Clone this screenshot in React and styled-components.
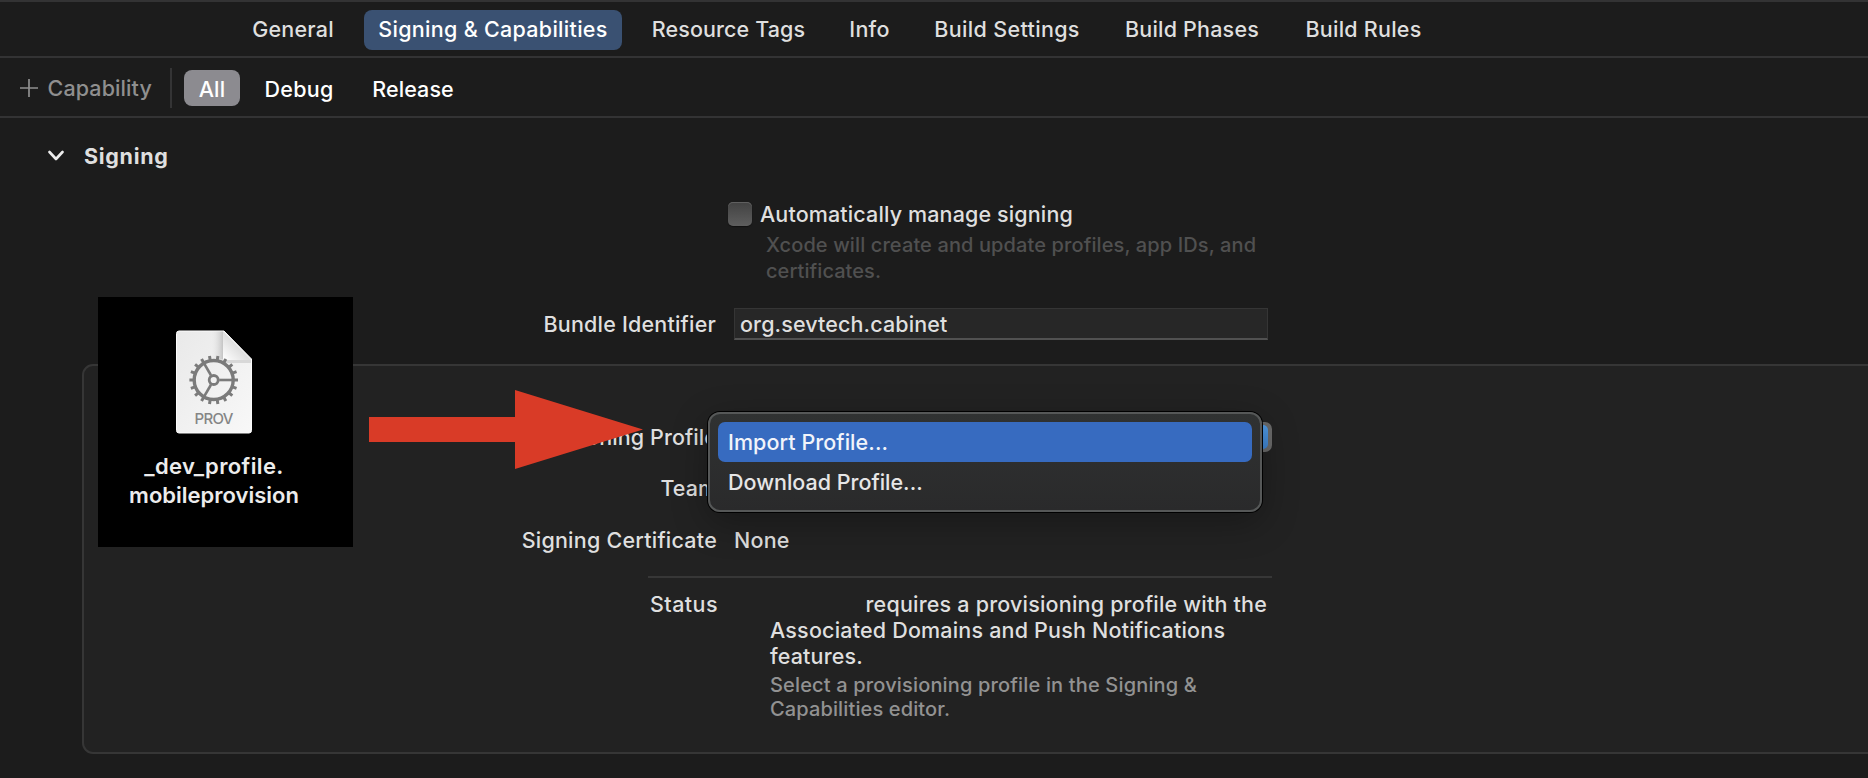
import React from "react";
import styled, { createGlobalStyle, css } from "styled-components";

const GlobalStyle = createGlobalStyle`
  *, *::before, *::after { box-sizing: border-box; }
  body {
    margin: 0;
    background: #1c1c1c;
    font-family: Inter, "Liberation Sans", sans-serif;
    -webkit-font-smoothing: antialiased;
  }
`;

const Editor = styled.main`
  position: relative;
  display: flex;
  flex-direction: column;
  height: 778px;
  overflow: hidden;
  background: #1c1c1c;
  color: #dfdfdf;
  font-size: 21.5px;
  font-weight: 500;
  line-height: 26px;
  white-space: nowrap;
`;

const Tracked = styled.span`
  letter-spacing: ${(p) => p.$tracking}px;
`;

/* Target tabs */
const TabBar = styled.nav`
  display: flex;
  gap: 16px;
  flex: none;
  height: 58px;
  padding: 8px 0 0 238px;
  border-top: 2px solid #333334;
  border-bottom: 2px solid #333334;
`;

const Tab = styled.div`
  display: flex;
  align-items: center;
  justify-content: center;
  width: ${(p) => p.$width}px;
  height: 40px;
  padding-bottom: 2px;
  border-radius: 8px;
  ${(p) =>
    p.$active &&
    css`
      background: #3a5172;
      color: #fff;
    `}
`;

/* Configuration filter */
const FilterBar = styled.div`
  display: flex;
  align-items: center;
  flex: none;
  height: 60px;
  padding: 2px 0 0 20px;
  border-bottom: 2px solid #333334;
  color: #fff;
`;

const AddCapability = styled.div`
  display: flex;
  align-items: center;
  gap: 9.5px;
  width: 150px;
  color: #8f8f8f;
`;

const Divider = styled.div`
  width: 2px;
  height: 40px;
  margin-right: 12px;
  background: #343435;
`;

const Filter = styled.div`
  display: flex;
  align-items: center;
  justify-content: center;
  width: ${(p) => p.$width}px;
  height: 36px;
  padding-top: 1px;
  border-radius: 8px;
  background: ${(p) => (p.$active ? "#8c8b90" : "transparent")};
`;

/* Signing section */
const SectionHeader = styled.header`
  display: flex;
  align-items: center;
  gap: 20px;
  flex: none;
  margin: 25px 0 0 48px;
  font-weight: 700;
`;

const CheckRow = styled.div`
  display: flex;
  align-items: center;
  gap: 8px;
  height: 26px;
  margin: 32px 0 0 728px;
`;

const Checkbox = styled.div`
  width: 24px;
  height: 24px;
  border-radius: 5px;
  background: linear-gradient(#424242, #5e5e5e);
  box-shadow: inset 0 1px 0 #606060, 0 1px 1px #111;
`;

const Hint = styled.div`
  display: flex;
  flex-direction: column;
  margin: 5px 0 0 766px;
  color: #505050;
  font-size: 20px;
`;

const FieldRow = styled.div`
  display: grid;
  grid-template-columns: ${(p) => p.$label}px 1fr;
  column-gap: ${(p) => p.$gap || 18}px;
  align-items: center;
  height: ${(p) => p.$height || 26}px;
  margin-top: ${(p) => p.$top}px;
`;

const FieldLabel = styled.label`
  text-align: right;
`;

const TextField = styled.div`
  display: flex;
  align-items: center;
  width: 534px;
  height: 32px;
  padding-left: 5px;
  border: 1px solid #353535;
  border-bottom: 2px solid #515151;
  background: #272727;
`;

const Panel = styled.section`
  flex: none;
  height: 390px;
  margin: 24px -20px 0 82px;
  border: 2px solid #363636;
  border-radius: 11px;
  background: #222;
`;

const SelectBox = styled.div`
  display: flex;
  justify-content: flex-end;
  width: 538px;
  height: 30px;
  padding: 3px 4px;
  border-radius: 7px;
  background: #6a6a6a;
`;

const SelectStepper = styled.div`
  width: 24px;
  height: 24px;
  border-radius: 5px;
  background: linear-gradient(#4f9ae4, #3f83cf);
`;

const Rule = styled.hr`
  width: 624px;
  height: 2px;
  margin: 23px 0 0 564px;
  border: 0;
  background: #373737;
`;

const StatusRow = styled.div`
  display: grid;
  grid-template-columns: 634px 1fr;
  column-gap: 52px;
  margin-top: 13px;
`;

const Message = styled.div`
  display: flex;
  flex-direction: column;
`;

const FirstLine = styled.div`
  padding-left: 95.5px;
`;

const Advice = styled.div`
  display: flex;
  flex-direction: column;
  margin-top: 4px;
  color: #929292;
  font-size: 20px;
  line-height: 24px;
`;

/* Floating pieces */
const FileTile = styled.figure`
  position: absolute;
  top: 297px;
  left: 98px;
  display: flex;
  flex-direction: column;
  align-items: center;
  width: 255px;
  height: 250px;
  margin: 0;
  padding: 32px 23px 0 0;
  background: #000;
`;

const FileName = styled.figcaption`
  display: flex;
  flex-direction: column;
  align-items: center;
  margin-top: 18px;
  color: #ececec;
  font-size: 22px;
  font-weight: 600;
  line-height: 28.5px;
`;

const Arrow = styled.svg`
  position: absolute;
  top: 390px;
  left: 369px;
`;

const Menu = styled.div`
  position: absolute;
  top: 412px;
  left: 708px;
  width: 554px;
  height: 100px;
  padding: 8px 8px;
  border: 2px solid #565858;
  border-radius: 12px;
  background: linear-gradient(#303232, #2a2a2b);
  box-shadow: 0 0 0 1px #000, 0 10px 36px rgba(0, 0, 0, 0.3);
`;

const MenuItem = styled.div`
  display: flex;
  align-items: center;
  height: 40px;
  padding: 0 10px 1px;
  border-radius: 7px;
  color: ${(p) => (p.$active ? "#f1f4fa" : "#e6e6e6")};
  background: ${(p) => (p.$active ? "#376bc0" : "transparent")};
`;

const TABS = [
  ["General", 110, 0.2],
  ["Signing & Capabilities", 258, 0.29],
  ["Resource Tags", 181, 0.1],
  ["Info", 69, 0.3],
  ["Build Settings", 174, 0.35],
  ["Build Phases", 164, 0.2],
  ["Build Rules", 147, 0.24],
];

const FILTERS = [
  ["All", 56, 0.17],
  ["Debug", 118, 0.28],
  ["Release", 110, 0.08],
];

const TEETH = Array.from({ length: 18 }, (_, i) => i * 20);

function ProfileIcon() {
  return (
    <svg width="78" height="105" viewBox="0 0 78 105">
      <defs>
        <linearGradient id="paper" x1="0" y1="0" x2="1" y2="1">
          <stop offset="0" stopColor="#e9e9e9" />
          <stop offset="1" stopColor="#f8f8f8" />
        </linearGradient>
        <linearGradient id="foldShade" x1="1" y1="0" x2="0" y2="0">
          <stop offset="0" stopColor="#c4c4c4" />
          <stop offset="1" stopColor="#ebebeb" stopOpacity="0" />
        </linearGradient>
        <linearGradient id="fold" x1="0" y1="1" x2="0.5" y2="0.5">
          <stop offset="0" stopColor="#fff" />
          <stop offset="1" stopColor="#dedede" />
        </linearGradient>
      </defs>
      <path
        d="M4 2h45L76.500 30V101.500a2.500 2.500 0 0 1-2.500 2.500H4A2.500 2.500 0 0 1 1.500 101.500V4.500A2.500 2.500 0 0 1 4 2Z"
        fill="url(#paper)"
        stroke="#fcfcfc"
        strokeWidth="1"
      />
      <path d="M36 2.500h12v28H36Z" fill="url(#foldShade)" />
      <path d="M48 31h28v3H50Z" fill="#d8d8d8" />
      <path d="M48 2.500L76 31H50.500A2.500 2.500 0 0 1 48 28.500Z" fill="url(#fold)" />
      <g transform="translate(38.700 51)" stroke="#7b7b7b" fill="none">
        <circle r="19.500" strokeWidth="3.400" />
        <circle r="4.500" strokeWidth="2.800" />
        {[0, 120, 240].map((a) => (
          <path key={a} d="M5.500 0H19" strokeWidth="2.600" transform={`rotate(${a})`} />
        ))}
        {TEETH.map((a) => (
          <path key={a} d="M20 0H24.300" strokeWidth="3" transform={`rotate(${a})`} />
        ))}
      </g>
      <text
        x="39"
        y="94.500"
        textAnchor="middle"
        textLength="39"
        fill="#858585"
        fontFamily="Inter, sans-serif"
        fontSize="15"
        fontWeight="500"
      >
        PROV
      </text>
    </svg>
  );
}

export default function App() {
  return (
    <>
      <GlobalStyle />
      <Editor>
        <TabBar>
          {TABS.map(([name, width, tracking], i) => (
            <Tab key={name} $width={width} $active={i === 1}>
              <Tracked $tracking={tracking}>{name}</Tracked>
            </Tab>
          ))}
        </TabBar>

        <FilterBar>
          <AddCapability>
            <svg width="18" height="18" viewBox="0 0 18 18">
              <path d="M9 0V18M0 9H18" stroke="#8f8f8f" strokeWidth="1.700" />
            </svg>
            <Tracked $tracking={0.11}>Capability</Tracked>
          </AddCapability>
          <Divider />
          {FILTERS.map(([name, width, tracking], i) => (
            <Filter key={name} $width={width} $active={i === 0}>
              <Tracked $tracking={tracking}>{name}</Tracked>
            </Filter>
          ))}
        </FilterBar>

        <SectionHeader>
          <svg width="16" height="12" viewBox="0 0 16 12">
            <path
              d="M1.500 2L8 9L14.500 2"
              fill="none"
              stroke="#ececec"
              strokeWidth="2.600"
              strokeLinecap="round"
              strokeLinejoin="round"
            />
          </svg>
          <Tracked $tracking={0.7}>Signing</Tracked>
        </SectionHeader>

        <CheckRow>
          <Checkbox />
          <Tracked $tracking={0.13}>Automatically manage signing</Tracked>
        </CheckRow>
        <Hint>
          <Tracked $tracking={0.11}>Xcode will create and update profiles, app IDs, and</Tracked>
          <Tracked $tracking={0.07}>certificates.</Tracked>
        </Hint>

        <FieldRow $label={716} $height={32} $top={24}>
          <FieldLabel>
            <Tracked $tracking={0.2}>Bundle Identifier</Tracked>
          </FieldLabel>
          <TextField>
            <Tracked $tracking={0.12}>org.sevtech.cabinet</Tracked>
          </TextField>
        </FieldRow>

        <Panel>
          <FieldRow $label={633} $gap={17} $height={30} $top={56}>
            <FieldLabel>
              <Tracked $tracking={0.08}>Provisioning Profile</Tracked>
            </FieldLabel>
            <SelectBox>
              <SelectStepper />
            </SelectBox>
          </FieldRow>
          <FieldRow $label={633} $top={23}>
            <FieldLabel>
              <Tracked $tracking={0}>Team</Tracked>
            </FieldLabel>
          </FieldRow>
          <FieldRow $label={633} $gap={17} $top={26}>
            <FieldLabel>
              <Tracked $tracking={0.23}>Signing Certificate</Tracked>
            </FieldLabel>
            <Tracked $tracking={0.2}>None</Tracked>
          </FieldRow>
          <Rule />
          <StatusRow>
            <FieldLabel>
              <Tracked $tracking={0.45}>Status</Tracked>
            </FieldLabel>
            <Message>
              <FirstLine>
                <Tracked $tracking={0.2}>requires a provisioning profile with the</Tracked>
              </FirstLine>
              <Tracked $tracking={0.19}>Associated Domains and Push Notifications</Tracked>
              <Tracked $tracking={0.15}>features.</Tracked>
              <Advice>
                <Tracked $tracking={0.16}>Select a provisioning profile in the Signing &amp;</Tracked>
                <Tracked $tracking={0.13}>Capabilities editor.</Tracked>
              </Advice>
            </Message>
          </StatusRow>
        </Panel>

        <FileTile>
          <ProfileIcon />
          <FileName>
            <Tracked $tracking={0.38}>_dev_profile.</Tracked>
            <Tracked $tracking={0}>mobileprovision</Tracked>
          </FileName>
        </FileTile>

        <Arrow width="275" height="80" viewBox="0 0 275 80">
          <path d="M0 27H146V0L274 39.500L146 79V52H0Z" fill="#d93b27" />
        </Arrow>

        <Menu>
          <MenuItem $active>
            <Tracked $tracking={0.07}>Import Profile...</Tracked>
          </MenuItem>
          <MenuItem>
            <Tracked $tracking={0}>Download Profile...</Tracked>
          </MenuItem>
        </Menu>
      </Editor>
    </>
  );
}
